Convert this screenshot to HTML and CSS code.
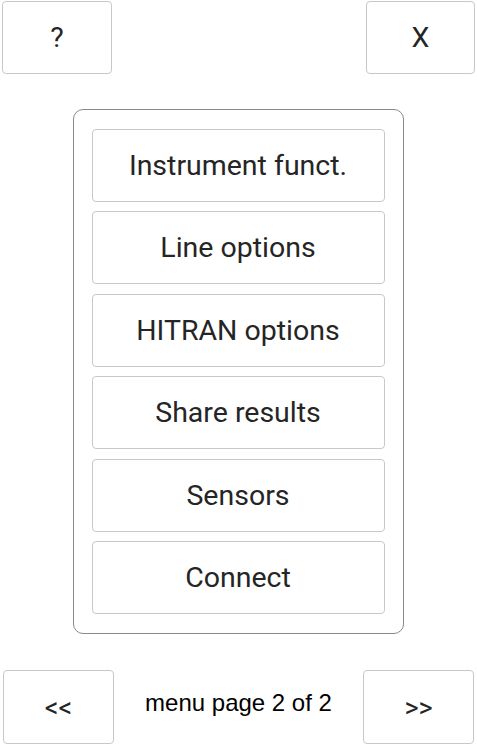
FILE: index.html
```html
<!DOCTYPE html>
<html>
<head>
<meta charset="utf-8">
<link rel="stylesheet" href="styles.css">
</head>
<body>
<div class="screen">
  <div class="top-row">
    <button class="btn btn-help">?</button>
    <button class="btn btn-close">X</button>
  </div>
  <div class="panel">
    <button class="btn item">Instrument funct.</button>
    <button class="btn item">Line options</button>
    <button class="btn item">HITRAN options</button>
    <button class="btn item">Share results</button>
    <button class="btn item">Sensors</button>
    <button class="btn item">Connect</button>
  </div>
  <div class="bottom-row">
    <button class="btn nav nav-prev">&lt;&lt;</button>
    <div class="page-label">menu page 2 of 2</div>
    <button class="btn nav nav-next">&gt;&gt;</button>
  </div>
</div>
</body>
</html>
```
FILE: styles.css
```css
html, body {
  margin: 0;
  padding: 0;
  background: #ffffff;
}
.screen {
  width: 477px;
  height: 745px;
  display: flex;
  flex-direction: column;
}
.btn {
  box-sizing: border-box;
  background: #ffffff;
  border: 1.5px solid #c8c8c8;
  border-radius: 4px;
  font-family: Roboto, "Liberation Sans", sans-serif;
  font-size: 28.5px;
  color: #252525;
  padding: 0;
  margin: 0;
}
.top-row {
  display: flex;
  justify-content: space-between;
  padding: 1px 2px 0 2px;
}
.btn-help {
  width: 110px;
  height: 73px;
}
.btn-close {
  width: 109px;
  height: 73px;
}
.panel {
  box-sizing: border-box;
  margin: 35px 0 0 73px;
  width: 331px;
  height: 525px;
  border: 1.5px solid #8a8a8a;
  border-radius: 10px;
  padding: 18.5px 17.5px;
  display: flex;
  flex-direction: column;
  gap: 9.6px;
}
.item {
  width: 293px;
  height: 73px;
  flex: none;
}
.bottom-row {
  margin-top: 36px;
  display: flex;
  align-items: flex-start;
  padding: 0 3px 0 3px;
}
.nav {
  width: 111px;
  height: 74px;
  flex: none;
  font-size: 27px;
  padding-top: 2px;
}
.nav-next {
  margin-left: auto;
}
.page-label {
  flex: 1;
  text-align: center;
  font-family: "Liberation Sans", Arial, sans-serif;
  font-size: 24px;
  color: #000000;
  padding-top: 19px;
}
```
